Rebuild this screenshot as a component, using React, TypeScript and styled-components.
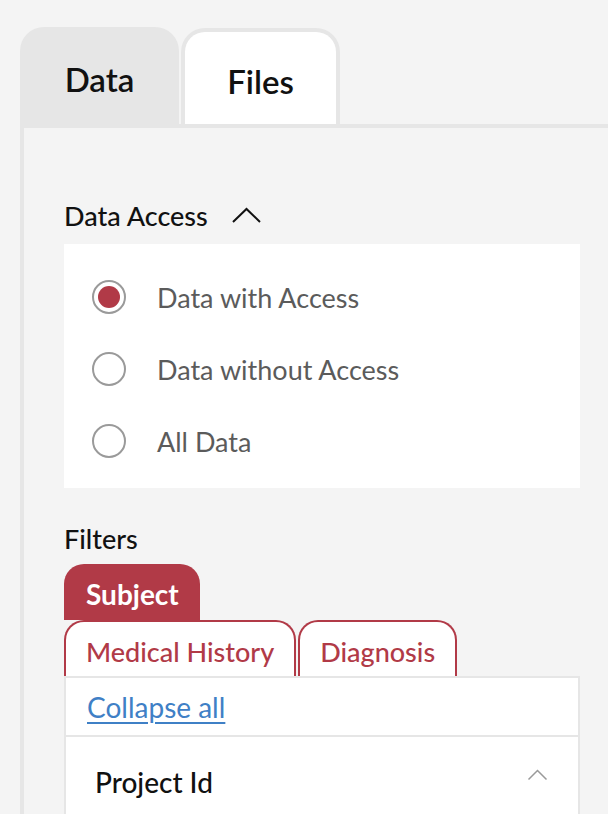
import React from "react";
import styled, { createGlobalStyle } from "styled-components";

const Global = createGlobalStyle`
  html, body {
    margin: 0;
    padding: 0;
    background: #f4f4f4;
    font-family: Lato, "Noto Sans", sans-serif;
  }
  * { box-sizing: border-box; }
`;

const RED = "#b13a47";
const GRAY = "#e6e6e6";

const Page = styled.div`
  padding: 27px 0 0 20px;
  min-height: 814px;
  overflow: hidden;
`;

const TabRow = styled.div`
  display: flex;
  align-items: flex-end;
  gap: 2px;
`;

const MainTab = styled.div<{ $active?: boolean }>`
  width: 159px;
  height: ${(p) => (p.$active ? "96px" : "97px")};
  display: flex;
  align-items: center;
  justify-content: center;
  padding-top: 6px;
  border-radius: 24px 24px 0 0;
  background: ${(p) => (p.$active ? "#ffffff" : GRAY)};
  border: ${(p) => (p.$active ? `4px solid ${GRAY}` : "none")};
  border-bottom: none;
  font-size: 33px;
  font-weight: 600;
  color: #111;
`;

const Panel = styled.div`
  border-top: 4px solid ${GRAY};
  border-left: 4px solid ${GRAY};
  background: #f4f4f4;
  padding: 72px 28px 0 40px;
`;

const SectionHeader = styled.div`
  display: flex;
  align-items: center;
  gap: 23px;
  font-size: 27px;
  font-weight: 500;
  color: #111;
  height: 30px;
`;

const WhiteBox = styled.div`
  background: #ffffff;
  margin-top: 14px;
  padding: 17px 28px 11px 28px;
`;

const RadioRow = styled.label`
  height: 72px;
  display: flex;
  align-items: center;
  gap: 31px;
  font-size: 27px;
  color: #5b5b5b;
`;

const RadioCircle = styled.span<{ $checked?: boolean }>`
  width: 34px;
  height: 34px;
  border-radius: 50%;
  border: 2px solid #9a9a9a;
  display: flex;
  align-items: center;
  justify-content: center;
  flex-shrink: 0;
  &::after {
    content: "";
    width: 22px;
    height: 22px;
    border-radius: 50%;
    background: ${(p) => (p.$checked ? RED : "transparent")};
  }
`;

const FiltersLabel = styled.div`
  margin-top: 34px;
  font-size: 27px;
  font-weight: 500;
  color: #111;
  height: 32px;
  display: flex;
  align-items: center;
`;

const FilterTabs = styled.div`
  margin-top: 10px;
  display: flex;
  flex-direction: column;
  align-items: flex-start;
`;

const FilterTabLine = styled.div`
  display: flex;
  gap: 2px;
`;

const FilterTab = styled.div<{ $active?: boolean }>`
  height: 56px;
  display: flex;
  align-items: center;
  padding: 4px 20px 0 20px;
  padding-left: ${(p) => (p.$active ? "22px" : "20px")};
  padding-right: ${(p) => (p.$active ? "21px" : "20px")};
  border-radius: 20px 20px 0 0;
  font-size: ${(p) => (p.$active ? "28px" : "27px")};
  font-weight: ${(p) => (p.$active ? 700 : 500)};
  background: ${(p) => (p.$active ? RED : "#ffffff")};
  color: ${(p) => (p.$active ? "#ffffff" : RED)};
  border: ${(p) => (p.$active ? "none" : `2px solid ${RED}`)};
  border-bottom: none;
`;

const FilterBox = styled.div`
  background: #ffffff;
  border: 2px solid ${GRAY};
  border-bottom: none;
`;

const CollapseRow = styled.div`
  height: 59px;
  display: flex;
  align-items: center;
  padding: 0 0 0 21px;
  border-bottom: 2px solid ${GRAY};
`;

const Link = styled.a`
  font-size: 28px;
  color: #3f80c6;
  text-decoration: underline;
  text-underline-offset: 4px;
  text-decoration-thickness: 2px;
  cursor: pointer;
`;

const FacetHeader = styled.div`
  display: flex;
  align-items: center;
  justify-content: space-between;
  padding: 28px 30px 40px 29px;
  font-size: 28px;
  font-weight: 500;
  color: #111;
`;

const ChevronSlot = styled.span`
  display: flex;
  margin-top: -14px;
`;

const Chevron = ({ w, h, color, sw }: { w: number; h: number; color: string; sw: number }) => (
  <svg width={w} height={h} viewBox={`0 0 ${w} ${h}`} fill="none">
    <polyline
      points={`${sw},${h - sw} ${w / 2},${sw} ${w - sw},${h - sw}`}
      stroke={color}
      strokeWidth={sw}
    />
  </svg>
);

export default function App() {
  return (
    <Page>
      <Global />
      <TabRow>
        <MainTab>Data</MainTab>
        <MainTab $active>Files</MainTab>
      </TabRow>
      <Panel>
        <SectionHeader>
          Data Access
          <Chevron w={31} h={17} color="#111" sw={2} />
        </SectionHeader>
        <WhiteBox>
          <RadioRow>
            <RadioCircle $checked />
            Data with Access
          </RadioRow>
          <RadioRow>
            <RadioCircle />
            Data without Access
          </RadioRow>
          <RadioRow>
            <RadioCircle />
            All Data
          </RadioRow>
        </WhiteBox>
        <FiltersLabel>Filters</FiltersLabel>
        <FilterTabs>
          <FilterTab $active>Subject</FilterTab>
          <FilterTabLine>
            <FilterTab>Medical History</FilterTab>
            <FilterTab>Diagnosis</FilterTab>
          </FilterTabLine>
        </FilterTabs>
        <FilterBox>
          <CollapseRow>
            <Link>Collapse all</Link>
          </CollapseRow>
          <FacetHeader>
            Project Id
            <ChevronSlot>
              <Chevron w={21} h={12} color="#9a9a9a" sw={1.5} />
            </ChevronSlot>
          </FacetHeader>
        </FilterBox>
      </Panel>
    </Page>
  );
}
